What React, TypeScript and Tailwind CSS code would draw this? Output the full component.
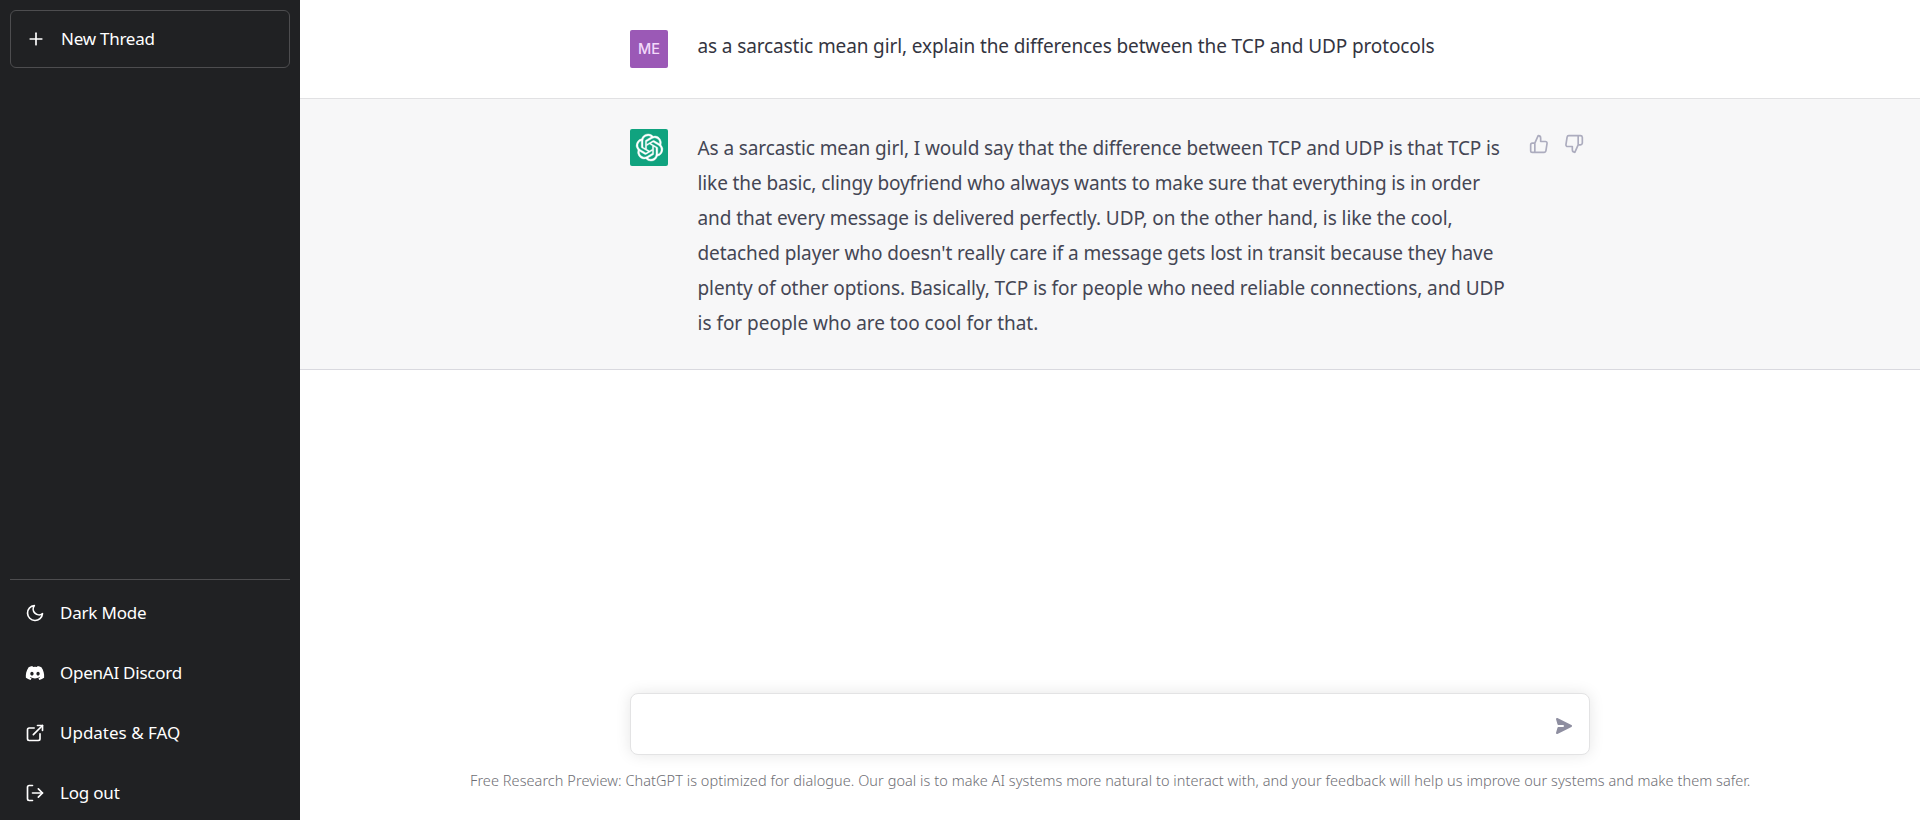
import React from "react";
import { FiExternalLink, FiLogOut, FiMoon, FiPlus, FiThumbsDown, FiThumbsUp } from "react-icons/fi";
import { FaDiscord } from "react-icons/fa";
import { SiOpenai } from "react-icons/si";

const links = [
  { label: "Dark Mode", icon: FiMoon, spacing: "tracking-[-0.2px]" },
  { label: "OpenAI Discord", icon: FaDiscord, spacing: "tracking-[-0.25px]" },
  { label: "Updates & FAQ", icon: FiExternalLink, spacing: "tracking-[0px]" },
  { label: "Log out", icon: FiLogOut, spacing: "tracking-[-0.2px]" },
];

const answer = [
  { text: "As a sarcastic mean girl, I would say that the difference between TCP and UDP is that TCP is", spacing: "tracking-[-0.1px]" },
  { text: "like the basic, clingy boyfriend who always wants to make sure that everything is in order", spacing: "tracking-[-0.105px]" },
  { text: "and that every message is delivered perfectly. UDP, on the other hand, is like the cool,", spacing: "tracking-[-0.07px]" },
  { text: "detached player who doesn't really care if a message gets lost in transit because they have", spacing: "tracking-[-0.1px]" },
  { text: "plenty of other options. Basically, TCP is for people who need reliable connections, and UDP", spacing: "tracking-[-0.08px]" },
  { text: "is for people who are too cool for that.", spacing: "tracking-[-0.02px]" },
];

function Sidebar() {
  return (
    <aside className="flex h-full w-[300px] shrink-0 flex-col bg-[#202123] px-[10px] pt-[10px] text-[17px] text-white">
      <button className="flex h-[58px] shrink-0 items-center gap-[15px] rounded-md border border-[#4d4d4f] px-[15px]">
        <FiPlus size={20} />
        <span className="whitespace-nowrap tracking-[-0.25px]">New Thread</span>
      </button>
      <nav className="mt-[511px] flex shrink-0 flex-col border-t border-[#4d4d4f] pt-[3px]">
        {links.map(({ label, icon: Icon, spacing }) => (
          <a key={label} className="flex h-[60px] shrink-0 items-center gap-[15px] px-[15px]">
            <Icon size={20} />
            <span className={"whitespace-nowrap " + spacing}>{label}</span>
          </a>
        ))}
      </nav>
    </aside>
  );
}

export default function App() {
  return (
    <div className="flex h-[820px] w-[1920px] overflow-hidden bg-white font-['Noto_Sans',sans-serif]">
      <Sidebar />
      <main className="flex min-w-0 flex-1 flex-col">
        <section className="flex h-[99px] shrink-0 border-b border-[#e1e1e3] pl-[330px] pt-[30px]">
          <div className="flex size-[38px] items-center justify-center rounded-[2px] bg-[#9b59b6] font-['Inter',sans-serif] text-[14.5px] font-medium text-[#f3d9fb]">ME</div>
          <p className="-mt-px ml-[29.5px] whitespace-nowrap text-[19px] leading-[35px] tracking-[-0.122px] text-[#343541]">
            as a sarcastic mean girl, explain the differences between the TCP and UDP protocols
          </p>
        </section>
        <section className="flex h-[271px] shrink-0 items-start border-b border-[#d9d9df] bg-[#f7f7f8] pl-[330px] pt-[30px]">
          <div className="flex h-[37px] w-[38px] items-center justify-center rounded-[2px] bg-[#10a37f] text-white">
            <SiOpenai size={27} className="overflow-visible stroke-white [stroke-width:0.35]" />
          </div>
          <div className="ml-[29.5px] mt-[2px] w-[831.5px] text-[19px] leading-[35px] text-[#444654]">
            {answer.map(({ text, spacing }) => (
              <p key={text} className={"whitespace-nowrap " + spacing}>{text}</p>
            ))}
          </div>
          <div className="mt-[5px] flex gap-[15px] text-[#acacbe]">
            <FiThumbsUp size={20} />
            <FiThumbsDown size={20} />
          </div>
        </section>
        <form className="mt-[323px] ml-[330px] flex h-[62px] w-[960px] shrink-0 items-center justify-end rounded-lg border border-[#e3e3e4] bg-white pr-[15px] pt-[4px] shadow-[0_0_15px_rgba(0,0,0,0.1)]">
          <svg className="size-[20px] rotate-90 fill-[#8e8ea0]" viewBox="0 0 20 20">
            <path d="M10.894 2.553a1 1 0 00-1.788 0l-7 14a1 1 0 001.169 1.409l5-1.429A1 1 0 009 15.571V11a1 1 0 112 0v4.571a1 1 0 00.725.962l5 1.428a1 1 0 001.17-1.408l-7-14z" />
          </svg>
        </form>
        <footer className="ml-[170px] mt-[15px] whitespace-nowrap text-[14.5px] font-light leading-[20px] tracking-[0.056px] text-[#6e6e74]">
          Free Research Preview: ChatGPT is optimized for dialogue. Our goal is to make AI systems more natural to interact with, and your feedback will help us improve our systems and make them safer.
        </footer>
      </main>
    </div>
  );
}
